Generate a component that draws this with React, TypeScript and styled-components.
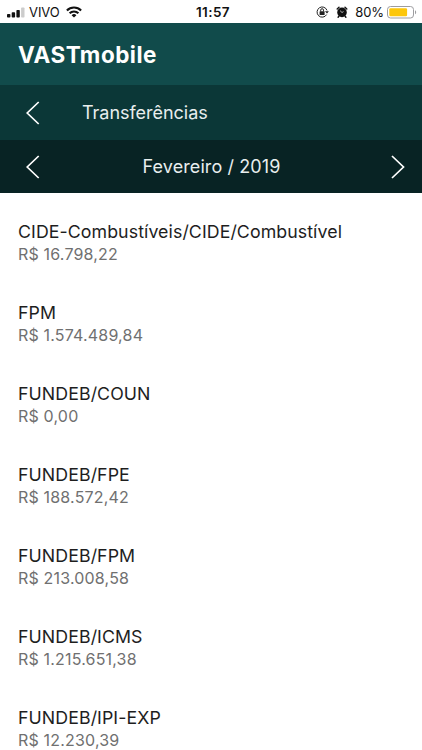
import React from "react";
import styled, { createGlobalStyle } from "styled-components";

const GlobalStyle = createGlobalStyle`
  * { box-sizing: border-box; }
  html, body { margin: 0; background: #fff; }
  body { font-family: Inter, "Liberation Sans", sans-serif; overflow: hidden; }
`;

const Screen = styled.main`
  display: flex;
  flex-direction: column;
  width: 422px;
  height: 750px;
  overflow: hidden;
  background: #fff;
`;

const StatusBar = styled.div`
  flex: none;
  display: grid;
  grid-template-columns: 1fr auto 1fr;
  align-items: center;
  height: 23px;
  padding: 1px 5px 0 7px;
  font-size: 13px;
  line-height: 22px;
  color: #111;
  svg { display: block; }
`;

const StatusGroup = styled.div<{ $end?: boolean }>`
  display: flex;
  align-items: center;
  justify-content: ${(p) => (p.$end ? "flex-end" : "flex-start")};
`;

const Carrier = styled.span`
  margin: 0 6px 0 4px;
  letter-spacing: -0.05px;
`;

const Clock = styled.span`
  padding-left: 2px;
  font-size: 13.5px;
  font-weight: 600;
  letter-spacing: 0.4px;
`;

const Percent = styled.span`
  margin: 0 3px 0 7px;
  letter-spacing: -0.1px;
`;

const AlarmSlot = styled.span`
  margin-left: 7px;
`;

const Brand = styled.header`
  flex: none;
  display: flex;
  align-items: center;
  height: 62px;
  padding: 0 18px;
  background: #114b4b;
  color: #fff;
  font-size: 22.5px;
  font-weight: 700;
  letter-spacing: 0.48px;
`;

const Bar = styled.div<{ $dark?: boolean }>`
  flex: none;
  display: grid;
  grid-template-columns: ${(p) => (p.$dark ? "40px 1fr 40px" : "40px 1fr")};
  column-gap: 24px;
  align-items: center;
  height: ${(p) => (p.$dark ? 53 : 55)}px;
  padding: 0 ${(p) => (p.$dark ? 17 : 18)}px 0 18px;
  background: ${(p) => (p.$dark ? "#082324" : "#0b3737")};
  color: #e8eeee;
  font-size: 18px;
  text-align: ${(p) => (p.$dark ? "center" : "left")};
`;

const BarText = styled.span<{ $spacing: number }>`
  line-height: 23px;
  letter-spacing: ${(p) => p.$spacing}px;
  white-space: nowrap;
`;

const ArrowButton = styled.button<{ $end?: boolean }>`
  display: flex;
  justify-content: ${(p) => (p.$end ? "flex-end" : "flex-start")};
  padding: 0 ${(p) => (p.$end ? 0 : 8)}px;
  border: 0;
  background: none;
  color: #fff;
`;

const List = styled.ul`
  margin: 0;
  padding: 27px 18px 0;
  list-style: none;
`;

const Item = styled.li`
  height: 81px;
`;

const Name = styled.div`
  height: 23px;
  line-height: 24px;
  font-size: 17.75px;
  letter-spacing: 0.08px;
  white-space: nowrap;
  color: #1e1e1e;
`;

const Amount = styled.div`
  height: 22px;
  line-height: 22px;
  font-size: 16px;
  letter-spacing: 0.18px;
  color: #707070;
`;

const Arrow = ({ right }: { right?: boolean }) => (
  <svg width="14" height="24" viewBox="0 0 14 24" fill="none" stroke="currentColor" strokeWidth="1.7">
    <path d={right ? "M1 1L12.5 12L1 23" : "M12.7 1L1.2 12L12.7 23"} />
  </svg>
);

const Signal = () => (
  <svg width="18" height="11" viewBox="0 0 18 11" fill="#111">
    <rect x="0" y="7" width="3.4" height="3.5" rx="0.8" />
    <rect x="4.7" y="5.2" width="3.4" height="5.3" rx="0.8" />
    <rect x="9.4" y="3" width="3.4" height="7.5" rx="0.8" />
    <rect x="14.1" y="0.5" width="3.4" height="10" rx="0.8" fill="#ccc" />
  </svg>
);

const Wifi = () => (
  <svg width="16" height="12" viewBox="0 0 16 12" fill="none" stroke="#111" strokeWidth="2.1">
    <path d="M0.9 4.5a10 10 0 0 1 14.2 0" />
    <path d="M3.6 7.3a6.2 6.2 0 0 1 8.8 0" />
    <path d="M8 11.6L5.6 9.2a3.4 3.4 0 0 1 4.8 0z" fill="#111" stroke="none" />
  </svg>
);

const RotationLock = () => (
  <svg width="13" height="12" viewBox="0 0 13 12" fill="none" stroke="#222" strokeWidth="1">
    <path d="M10.6 8.6a5.1 5.1 0 1 1 .4-4.2" />
    <path d="M8.9 5.2h4L11 7.6z" fill="#222" stroke="none" />
    <rect x="3.6" y="5.2" width="5" height="3.7" rx="0.5" fill="#222" stroke="none" />
    <path d="M4.7 5.4V4.1a1.4 1.4 0 0 1 2.8 0v1.3" />
  </svg>
);

const Alarm = () => (
  <svg width="12" height="12" viewBox="0 0 12 12">
    <circle cx="6" cy="6.4" r="4.8" fill="#111" />
    <path d="M1.2 2.9L3 1.2M9 1.2l1.8 1.7M2.9 10.2l-.8 1M9.1 10.2l.8 1" stroke="#111" strokeWidth="1.4" strokeLinecap="round" />
    <path d="M4.1 4.7L6 6.5L7.5 5.6" stroke="#fff" strokeWidth="0.7" fill="none" />
  </svg>
);

const Battery = () => (
  <svg width="30" height="13" viewBox="0 0 30 13">
    <rect x="0.5" y="0.5" width="26" height="11.5" rx="3" fill="#fff" stroke="#9d9da0" />
    <rect x="2.3" y="2.2" width="17.8" height="8" rx="1.2" fill="#fdc70b" />
    <path d="M28 4.2c1.6.7 1.6 3.4 0 4.1z" fill="#9d9da0" />
  </svg>
);

const transfers = [
  { name: "CIDE-Combustíveis/CIDE/Combustível", amount: "R$ 16.798,22" },
  { name: "FPM", amount: "R$ 1.574.489,84" },
  { name: "FUNDEB/COUN", amount: "R$ 0,00" },
  { name: "FUNDEB/FPE", amount: "R$ 188.572,42" },
  { name: "FUNDEB/FPM", amount: "R$ 213.008,58" },
  { name: "FUNDEB/ICMS", amount: "R$ 1.215.651,38" },
  { name: "FUNDEB/IPI-EXP", amount: "R$ 12.230,39" },
];

export default function App() {
  return (
    <Screen>
      <GlobalStyle />
      <StatusBar>
        <StatusGroup>
          <Signal />
          <Carrier>VIVO</Carrier>
          <Wifi />
        </StatusGroup>
        <Clock>11:57</Clock>
        <StatusGroup $end>
          <RotationLock />
          <AlarmSlot><Alarm /></AlarmSlot>
          <Percent>80%</Percent>
          <Battery />
        </StatusGroup>
      </StatusBar>
      <Brand>VASTmobile</Brand>
      <Bar>
        <ArrowButton aria-label="Voltar"><Arrow /></ArrowButton>
        <BarText $spacing={-0.03}>Transferências</BarText>
      </Bar>
      <Bar $dark>
        <ArrowButton aria-label="Mês anterior"><Arrow /></ArrowButton>
        <BarText $spacing={0.1}>Fevereiro / 2019</BarText>
        <ArrowButton $end aria-label="Próximo mês"><Arrow right /></ArrowButton>
      </Bar>
      <List>
        {transfers.map((t) => (
          <Item key={t.name}>
            <Name>{t.name}</Name>
            <Amount>{t.amount}</Amount>
          </Item>
        ))}
      </List>
    </Screen>
  );
}
